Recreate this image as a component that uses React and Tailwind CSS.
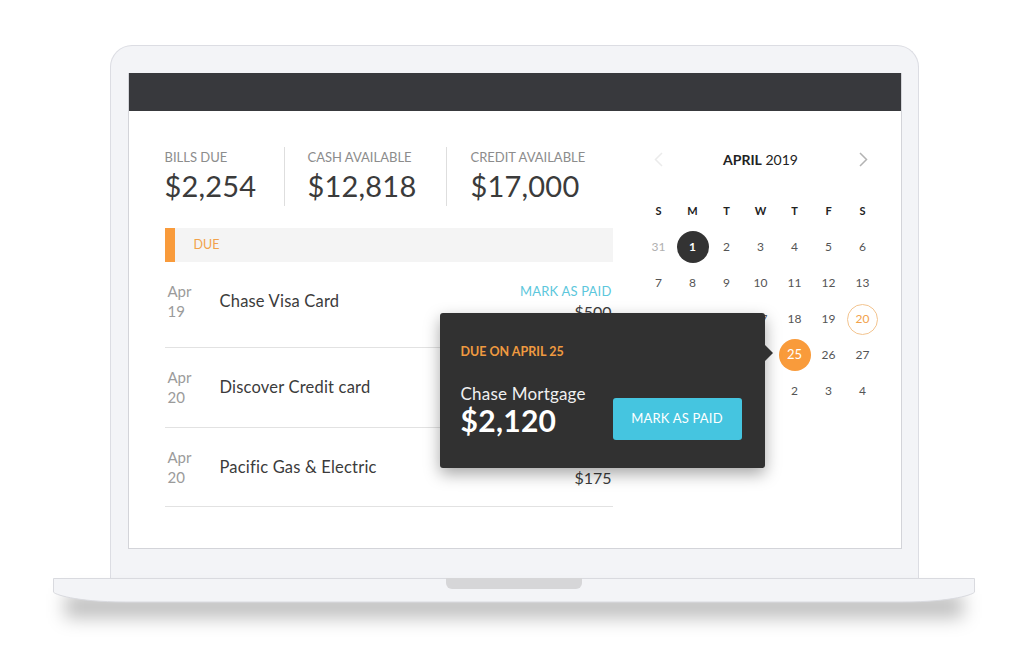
import React from 'react';

const stats = [
  { label: 'BILLS DUE', value: '$2,254', w: 'w-[119px]' },
  { label: 'CASH AVAILABLE', value: '$12,818', w: 'w-[162px] pl-[23px] border-l border-[#dedede]' },
  { label: 'CREDIT AVAILABLE', value: '$17,000', w: 'flex-1 pl-[24px] border-l border-[#dedede]' },
];

// row 2 amount sits under the popup, so it is left empty
const bills = [
  { mon: 'Apr', day: '19', name: 'Chase Visa Card', amount: '$500', mark: true, h: 'h-[86px]' },
  { mon: 'Apr', day: '20', name: 'Discover Credit card', amount: '', mark: false, h: 'h-[80px]' },
  { mon: 'Apr', day: '20', name: 'Pacific Gas & Electric', amount: '$175', mark: false, h: 'h-[79px]' },
];

const weeks = [
  [31, 1, 2, 3, 4, 5, 6],
  [7, 8, 9, 10, 11, 12, 13],
  [14, 15, 16, 17, 18, 19, 20],
  [21, 22, 23, 24, 25, 26, 27],
  [28, 29, 30, 1, 2, 3, 4],
];

function DayCell({ n, wi }) {
  // special days: prev month, today, marked, due
  if (wi === 0 && n === 31) {
    return <div className="flex items-center justify-center h-[36px] text-[12px] text-[#b0b0b0]">{n}</div>;
  }
  if (wi === 0 && n === 1) {
    return (
      <div className="flex items-center justify-center h-[36px]">
        <div className="w-[32px] h-[32px] rounded-full bg-[#333333] text-white text-[12px] font-bold flex items-center justify-center">1</div>
      </div>
    );
  }
  if (n === 20 && wi === 2) {
    return (
      <div className="flex items-center justify-center h-[36px]">
        <div className="w-[31px] h-[31px] rounded-full border border-[#f3c48f] text-[#f2a24a] text-[12px] flex items-center justify-center">20</div>
      </div>
    );
  }
  if (n === 25) {
    return (
      <div className="flex items-center justify-center h-[36px]">
        <div className="w-[32px] h-[32px] rounded-full bg-[#f99b3b] text-white text-[13px] flex items-center justify-center">25</div>
      </div>
    );
  }
  return <div className="flex items-center justify-center h-[36px] text-[12px] text-[#555555]">{n}</div>;
}

export default function App() {
  return (
    <div className="w-[1028px] h-[663px] bg-white flex flex-col items-center pt-[45px] font-['Lato','Noto_Sans',sans-serif] overflow-hidden">
      {/* Laptop lid */}
      <div className="w-[809px] h-[533px] rounded-t-[22px] border border-b-0 border-[#dcdde3] bg-[#f3f4f7] pt-[27px] px-[17px]">
        <div className="w-[774px] h-[476px] bg-white border-x border-b border-[#d3d4d9] flex flex-col">
          <div className="h-[38px] bg-[#38393d] shrink-0" />

          <div className="relative flex pt-[36px] pl-[36px] pr-[20px]">
            {/* Left column */}
            <div className="w-[448px]">
              <div className="flex h-[59px]">
                {stats.map((s) => (
                  <div key={s.label} className={`${s.w} pt-[2px]`}>
                    <div className="text-[13px] leading-4 text-[#8c8c8c]">{s.label}</div>
                    <div className="text-[29px] leading-8 mt-[5px] text-[#3b3b3b] tracking-[0.2px]">{s.value}</div>
                  </div>
                ))}
              </div>

              <div className="mt-[22px] h-[34px] bg-[#f4f4f4] flex items-center">
                <div className="w-[10px] h-full bg-[#f99b3b]" />
                <span className="ml-[19px] text-[12.5px] text-[#f2a24a]">DUE</span>
              </div>

              {bills.map((b) => (
                <div key={b.name} className={`${b.h} border-b border-[#e2e2e2] flex items-start pt-[19px]`}>
                  <div className="flex items-center flex-1">
                    <div className="w-[55px] pl-[3px] text-[15px] leading-5 text-[#9b9b9b]">
                      <div>{b.mon}</div>
                      <div>{b.day}</div>
                    </div>
                    <div className="text-[16.5px] text-[#3b3b3b] tracking-[0.2px]">{b.name}</div>
                  </div>
                  {b.amount && (
                    <div className="mt-[2px] flex flex-col items-end pr-[1px]">
                      <div className={`text-[13px] leading-4 tracking-[0.2px] ${b.mark ? 'text-[#5cc7dc]' : 'invisible'}`}>MARK AS PAID</div>
                      <div className="mt-[3px] text-[16px] leading-5 text-[#3b3b3b]">{b.amount}</div>
                    </div>
                  )}
                </div>
              ))}
            </div>

            {/* Calendar */}
            <div className="ml-[29px] w-[238px]">
              <div className="h-[24px] flex items-center justify-between px-[12px]">
                <svg width="9" height="15" viewBox="0 0 9 15" fill="none">
                  <polyline points="8,1 1.5,7.5 8,14" stroke="#ebebeb" strokeWidth="1.5" />
                </svg>
                <div className="text-[14px] text-[#222222]">
                  <span className="font-bold">APRIL</span> 2019
                </div>
                <svg width="9" height="15" viewBox="0 0 9 15" fill="none">
                  <polyline points="1,1 7.5,7.5 1,14" stroke="#b3b3b3" strokeWidth="1.5" />
                </svg>
              </div>

              <div className="mt-[22px] grid grid-cols-7">
                {['S', 'M', 'T', 'W', 'T', 'F', 'S'].map((d, i) => (
                  <div key={i} className="h-[36px] flex items-center justify-center text-[11px] font-bold text-[#222222]">{d}</div>
                ))}
                {weeks.map((w, wi) =>
                  w.map((n, di) => <DayCell key={`${wi}-${di}`} n={n} wi={wi} />)
                )}
              </div>
            </div>

            {/* Popup */}
            <div className="absolute left-[311px] top-[202px] w-[325px] h-[155px] bg-[#313131] rounded-[3px] shadow-[0_6px_16px_rgba(0,0,0,0.35)] pl-[21px] pt-[31px]">
              <div className="absolute right-[-8px] top-[32px] w-0 h-0 border-y-[8px] border-y-transparent border-l-[8px] border-l-[#313131]" />
              <div className="text-[12.5px] leading-4 font-bold text-[#ef9a40]">DUE ON APRIL 25</div>
              <div className="mt-[24px] flex items-start">
                <div>
                  <div className="text-[17px] leading-5 text-[#f0f0f0] tracking-[0.2px]">Chase Mortgage</div>
                  <div className="text-[30px] leading-8 font-bold text-white tracking-[0.3px]">$2,120</div>
                </div>
                <button className="ml-auto mr-[23px] mt-[14px] w-[129px] h-[42px] rounded-[3px] bg-[#45c5e0] text-white text-[13px] tracking-[0.2px]">
                  MARK AS PAID
                </button>
              </div>
            </div>
          </div>
        </div>
      </div>

      {/* Laptop base */}
      <div className="relative w-[922px] h-[26px]">
        <div className="absolute left-[12px] right-[12px] top-[16px] h-[24px] bg-black/25 blur-[9px]" />
        <svg className="relative" width="922" height="26" viewBox="0 0 922 26">
          <path d="M0.5 0.5 H921.5 V14 C921.5 16 900 24 850 24 H72 C22 24 0.5 16 0.5 14 Z" fill="#f3f4f7" stroke="#d9dadf" />
        </svg>
        <div className="absolute left-[393px] top-0 w-[136px] h-[11px] rounded-b-[6px] bg-[#d6d6d8]" />
      </div>
    </div>
  );
}
